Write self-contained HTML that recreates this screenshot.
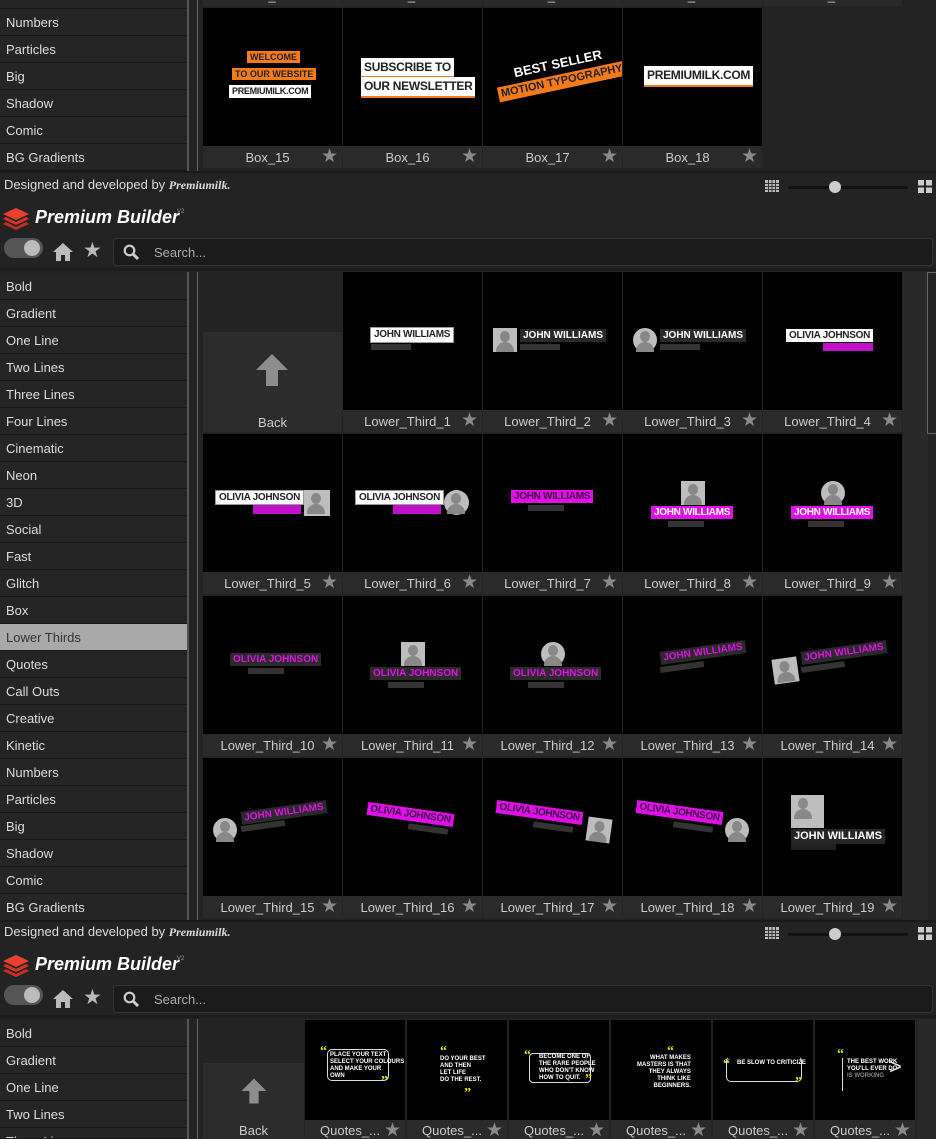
<!DOCTYPE html>
<html style="overflow:hidden;height:1139px"><head><meta charset="utf-8"><style>
*{box-sizing:border-box}
html,body{overflow:hidden}
body{margin:0;width:936px;height:1139px;overflow:hidden;background:#232323;position:relative;font-family:"Liberation Sans",sans-serif;color:#ddd}
.a{position:absolute}
.si{position:absolute;left:0;width:187px;height:27px;background:#252525;border-bottom:1px solid #191919;color:#ddd;font-size:13px;line-height:27px;padding-left:6px}
.sel{background:#a9a9a9;color:#333}
.c{position:absolute;width:139px}
.t{height:138px;background:#000;position:relative;overflow:hidden}
.l{height:22px;background:#2a2a2a;color:#ccc;text-align:center;line-height:24px;font-size:13px;position:relative;padding-right:14px;padding-left:4px;white-space:nowrap}
.l b{position:absolute;right:4px;top:0;color:#8a8a8a;font-weight:normal;font-size:19px;line-height:22px}
.qc{position:absolute;width:100px}
.qc .t{height:100px}
.qc .l{font-size:13px;height:20px;line-height:22px}
.wb{position:absolute;background:#fff;color:#222;font:bold 10px/13px "Liberation Sans",sans-serif;padding:0 3px;white-space:nowrap;letter-spacing:-.3px}
.mb{position:absolute;background:#e010e6;color:#fff;font:bold 10px/13px "Liberation Sans",sans-serif;padding:0 3px;white-space:nowrap;letter-spacing:-.3px}
.mb.p{color:#40004a}
.gb{position:absolute;background:#333;height:6px}
.pb{position:absolute;background:#c010c8;height:6px}
.av{position:absolute;background:#bdbdbd;width:24px;height:24px}
.av:after{content:"";position:absolute;left:7px;top:3px;width:10px;height:11px;border-radius:50%;background:#888}
.av:before{content:"";position:absolute;left:3px;top:14px;width:18px;height:10px;border-radius:9px 9px 0 0;background:#888}
.ci{border-radius:50%}
.ds{position:absolute;background:#2a2a2a;color:#fff;font:bold 10px/13px "Liberation Sans",sans-serif;padding:0 3px;white-space:nowrap}
.rot{transform:rotate(-8deg)}
.ob{position:absolute;background:#f47a1a;color:#222;font:bold 8px/11px "Liberation Sans",sans-serif;padding:0 3px;white-space:nowrap}
.hdr{position:absolute;left:0;width:936px}
.qt{position:absolute;color:#fff;font:bold 6px/7px "Liberation Sans",sans-serif;white-space:nowrap}
.qy{position:absolute;color:#e6e000;font:bold 14px/14px "Liberation Serif",serif}
</style></head><body>

<div class="si" style="top:-18px">Kinetic</div>
<div class="si" style="top:9px">Numbers</div>
<div class="si" style="top:36px">Particles</div>
<div class="si" style="top:63px">Big</div>
<div class="si" style="top:90px">Shadow</div>
<div class="si" style="top:117px">Comic</div>
<div class="si" style="top:144px">BG Gradients</div>
<div class="a" style="left:187px;top:0;width:2px;height:171px;background:#555"></div>
<div class="a" style="left:197px;top:0;width:1px;height:171px;background:#666"></div>

<div class="c" style="left:203px;top:-16px"><div class="l">Box_11<b>★</b></div></div>
<div class="c" style="left:343px;top:-16px"><div class="l">Box_12<b>★</b></div></div>
<div class="c" style="left:483px;top:-16px"><div class="l">Box_13<b>★</b></div></div>
<div class="c" style="left:623px;top:-16px"><div class="l">Box_14<b>★</b></div></div>
<div class="c" style="left:763px;top:-16px"><div class="l">Box_10<b>★</b></div></div>

<div class="c" style="left:203px;top:8px"><div class="t">
<div class="ob" style="left:44px;top:43px;font-size:9px;line-height:12px">WELCOME</div>
<div class="ob" style="left:29px;top:60px;font-size:9px;line-height:12px">TO OUR WEBSITE</div>
<div class="wb" style="left:26px;top:77px;font-size:9px;line-height:13px">PREMIUMILK.COM</div>
</div><div class="l">Box_15<b>★</b></div></div>
<div class="c" style="left:343px;top:8px"><div class="t">
<div class="wb" style="left:18px;top:50px;font-size:12px;line-height:18px;border-bottom:2px solid #f47a1a">SUBSCRIBE TO</div>
<div class="wb" style="left:18px;top:69px;font-size:12px;line-height:19px;border-bottom:2px solid #f47a1a">OUR NEWSLETTER</div>
</div><div class="l">Box_16<b>★</b></div></div>
<div class="c" style="left:483px;top:8px"><div class="t">
<div class="a" style="left:30px;top:48px;color:#fff;font:bold 13px 'Liberation Sans',sans-serif;transform:rotate(-12deg)">BEST SELLER</div>
<div class="ob" style="left:14px;top:66px;font-size:11px;line-height:15px;transform:rotate(-12deg)">MOTION TYPOGRAPHY</div>
</div><div class="l">Box_17<b>★</b></div></div>
<div class="c" style="left:623px;top:8px"><div class="t">
<div class="wb" style="left:21px;top:58px;font-size:12px;line-height:19px;border-bottom:2px solid #f47a1a">PREMIUMILK.COM</div>
</div><div class="l">Box_18<b>★</b></div></div>

<div class="hdr" style="top:171px;height:2px;background:#1a1a1a"></div>
<div class="a" style="left:4px;top:177px;font-size:13px;color:#ddd">Designed and developed by <i style="font-family:'Liberation Serif',serif;font-weight:bold;font-size:12px">Premiumilk.</i></div>
<svg class="a" style="left:765px;top:180px" width="14" height="12"><rect x="0" y="0" width="14" height="12" fill="#bbb"/><path d="M3.5 0V12M7 0V12M10.5 0V12M0 3.5H14M0 6.5H14M0 9.5H14" stroke="#333"/></svg>
<div class="a" style="left:788px;top:186px;width:120px;height:3px;background:#111;border-radius:2px"></div>
<div class="a" style="left:829px;top:181px;width:12px;height:12px;background:#ccc;border-radius:50%"></div>
<svg class="a" style="left:918px;top:180px" width="14" height="13"><g fill="#ccc"><rect x="0" y="0" width="6" height="5.5"/><rect x="8" y="0" width="6" height="5.5"/><rect x="0" y="7.5" width="6" height="5.5"/><rect x="8" y="7.5" width="6" height="5.5"/></g></svg>

<svg class="a" style="left:3px;top:208px" width="26" height="22" viewBox="0 0 26 22"><path d="M13 0L26 6L13 12L0 6Z" fill="#e8412c"/><path d="M3 9L13 14L23 9L26 11L13 17L0 11Z" fill="#d83524"/><path d="M3 14L13 19L23 14L26 16L13 22L0 16Z" fill="#c82e1e"/></svg>
<div class="a" style="left:35px;top:207px;color:#fff;font:italic bold 18px 'Liberation Sans',sans-serif">Premium Builder</div>
<div class="a" style="left:177px;top:209px;color:#999;font-size:6px">V2</div>
<div class="a" style="left:4px;top:238px;width:39px;height:20px;background:#555;border-radius:10px"></div>
<div class="a" style="left:24px;top:240px;width:16px;height:16px;background:#bbb;border-radius:50%"></div>
<svg class="a" style="left:53px;top:242px" width="20" height="19" viewBox="0 0 20 19"><path d="M10 1L0 10H3V19H8V13H12V19H17V10H20Z" fill="#bbb"/></svg>
<div class="a" style="left:83px;top:238px;color:#bbb;font-size:21px">★</div>
<div class="a" style="left:113px;top:238px;width:820px;height:28px;background:#1b1b1b;border:1px solid #333;border-radius:4px"></div>
<svg class="a" style="left:123px;top:244px" width="16" height="16" viewBox="0 0 16 16"><circle cx="6.5" cy="6.5" r="4.8" fill="none" stroke="#ccc" stroke-width="2.2"/><path d="M10 10L15 15" stroke="#ccc" stroke-width="3"/></svg>
<div class="a" style="left:154px;top:245px;color:#aaa;font-size:13px">Search...</div>
<div class="hdr" style="top:268px;height:3px;background:#1d1d1d"></div>

<div class="si" style="top:273px">Bold</div>
<div class="si" style="top:300px">Gradient</div>
<div class="si" style="top:327px">One Line</div>
<div class="si" style="top:354px">Two Lines</div>
<div class="si" style="top:381px">Three Lines</div>
<div class="si" style="top:408px">Four Lines</div>
<div class="si" style="top:435px">Cinematic</div>
<div class="si" style="top:462px">Neon</div>
<div class="si" style="top:489px">3D</div>
<div class="si" style="top:516px">Social</div>
<div class="si" style="top:543px">Fast</div>
<div class="si" style="top:570px">Glitch</div>
<div class="si" style="top:597px">Box</div>
<div class="si sel" style="top:624px">Lower Thirds</div>
<div class="si" style="top:651px">Quotes</div>
<div class="si" style="top:678px">Call Outs</div>
<div class="si" style="top:705px">Creative</div>
<div class="si" style="top:732px">Kinetic</div>
<div class="si" style="top:759px">Numbers</div>
<div class="si" style="top:786px">Particles</div>
<div class="si" style="top:813px">Big</div>
<div class="si" style="top:840px">Shadow</div>
<div class="si" style="top:867px">Comic</div>
<div class="si" style="top:894px">BG Gradients</div>
<div class="a" style="left:187px;top:272px;width:2px;height:648px;background:#555"></div>
<div class="a" style="left:197px;top:272px;width:1px;height:648px;background:#666"></div>
<div class="a" style="left:903px;top:272px;width:25px;height:648px;background:#292929"></div>
<div class="a" style="left:927px;top:272px;width:9px;height:162px;border:1px solid #666;border-right:none"></div>

<div class="a" style="left:203px;top:332px;width:139px;height:100px;background:#2c2c2c"></div>
<svg class="a" style="left:254px;top:352px" width="36" height="36" viewBox="0 0 36 36"><path d="M18 2L34 18H24V34H12V18H2Z" fill="#8d8d8d"/></svg>
<div class="a" style="left:203px;top:411px;width:139px;text-align:center;font-size:13px;line-height:24px;color:#ccc">Back</div>

<div class="c" style="left:343px;top:272px"><div class="t">
<div class="wb" style="left:28px;top:56px;font-size:10px;line-height:14px;outline:1px solid #999">JOHN WILLIAMS</div>
<div class="gb" style="left:28px;top:72px;width:40px"></div>
</div><div class="l">Lower_Third_1<b>★</b></div></div>
<div class="c" style="left:483px;top:272px"><div class="t">
<div class="av" style="left:10px;top:56px"></div>
<div class="ds" style="left:37px;top:57px">JOHN WILLIAMS</div>
<div class="gb" style="left:37px;top:72px;width:40px"></div>
</div><div class="l">Lower_Third_2<b>★</b></div></div>
<div class="c" style="left:623px;top:272px"><div class="t">
<div class="av ci" style="left:10px;top:56px"></div>
<div class="ds" style="left:37px;top:57px">JOHN WILLIAMS</div>
<div class="gb" style="left:37px;top:72px;width:40px"></div>
</div><div class="l">Lower_Third_3<b>★</b></div></div>
<div class="c" style="left:763px;top:272px"><div class="t">
<div class="wb" style="left:23px;top:57px">OLIVIA JOHNSON</div>
<div class="pb" style="left:60px;top:71px;width:50px;height:8px"></div>
</div><div class="l">Lower_Third_4<b>★</b></div></div>

<div class="c" style="left:203px;top:434px"><div class="t">
<div class="wb" style="left:13px;top:57px;outline:1px solid #999">OLIVIA JOHNSON</div>
<div class="pb" style="left:50px;top:71px;width:48px;height:9px"></div>
<div class="av" style="left:101px;top:56px;width:26px;height:26px"></div>
</div><div class="l">Lower_Third_5<b>★</b></div></div>
<div class="c" style="left:343px;top:434px"><div class="t">
<div class="wb" style="left:13px;top:57px;outline:1px solid #999">OLIVIA JOHNSON</div>
<div class="pb" style="left:50px;top:71px;width:48px;height:9px"></div>
<div class="av ci" style="left:101px;top:56px;width:25px;height:25px"></div>
</div><div class="l">Lower_Third_6<b>★</b></div></div>
<div class="c" style="left:483px;top:434px"><div class="t">
<div class="mb p" style="left:28px;top:56px">JOHN WILLIAMS</div>
<div class="gb" style="left:45px;top:71px;width:36px"></div>
</div><div class="l">Lower_Third_7<b>★</b></div></div>
<div class="c" style="left:623px;top:434px"><div class="t">
<div class="av" style="left:58px;top:47px"></div>
<div class="mb" style="left:28px;top:72px">JOHN WILLIAMS</div>
<div class="gb" style="left:45px;top:87px;width:36px"></div>
</div><div class="l">Lower_Third_8<b>★</b></div></div>
<div class="c" style="left:763px;top:434px"><div class="t">
<div class="av ci" style="left:58px;top:47px"></div>
<div class="mb" style="left:28px;top:72px">JOHN WILLIAMS</div>
<div class="gb" style="left:45px;top:87px;width:36px"></div>
</div><div class="l">Lower_Third_9<b>★</b></div></div>

<div class="c" style="left:203px;top:596px"><div class="t">
<div class="ds" style="left:27px;top:57px;color:#e010e6">OLIVIA JOHNSON</div>
<div class="gb" style="left:45px;top:72px;width:36px"></div>
</div><div class="l">Lower_Third_10<b>★</b></div></div>
<div class="c" style="left:343px;top:596px"><div class="t">
<div class="av" style="left:58px;top:46px"></div>
<div class="ds" style="left:27px;top:71px;color:#e010e6">OLIVIA JOHNSON</div>
<div class="gb" style="left:45px;top:86px;width:36px"></div>
</div><div class="l">Lower_Third_11<b>★</b></div></div>
<div class="c" style="left:483px;top:596px"><div class="t">
<div class="av ci" style="left:58px;top:46px"></div>
<div class="ds" style="left:27px;top:71px;color:#e010e6">OLIVIA JOHNSON</div>
<div class="gb" style="left:45px;top:86px;width:36px"></div>
</div><div class="l">Lower_Third_12<b>★</b></div></div>
<div class="c" style="left:623px;top:596px"><div class="t">
<div class="ds rot" style="left:37px;top:50px;color:#e010e6">JOHN WILLIAMS</div>
<div class="gb rot" style="left:37px;top:68px;width:44px"></div>
</div><div class="l">Lower_Third_13<b>★</b></div></div>
<div class="c" style="left:763px;top:596px"><div class="t">
<div class="av rot" style="left:10px;top:62px;width:25px;height:25px"></div>
<div class="ds rot" style="left:38px;top:50px;color:#e010e6">JOHN WILLIAMS</div>
<div class="gb rot" style="left:38px;top:68px;width:44px"></div>
</div><div class="l">Lower_Third_14<b>★</b></div></div>

<div class="c" style="left:203px;top:758px"><div class="t">
<div class="av ci" style="left:10px;top:60px"></div>
<div class="ds rot" style="left:38px;top:48px;color:#e010e6">JOHN WILLIAMS</div>
<div class="gb rot" style="left:38px;top:65px;width:44px"></div>
</div><div class="l">Lower_Third_15<b>★</b></div></div>
<div class="c" style="left:343px;top:758px"><div class="t">
<div class="mb p" style="left:24px;top:50px;transform:rotate(8deg)">OLIVIA JOHNSON</div>
<div class="gb" style="left:65px;top:68px;width:40px;transform:rotate(8deg)"></div>
</div><div class="l">Lower_Third_16<b>★</b></div></div>
<div class="c" style="left:483px;top:758px"><div class="t">
<div class="mb p" style="left:13px;top:48px;transform:rotate(8deg)">OLIVIA JOHNSON</div>
<div class="gb" style="left:50px;top:66px;width:40px;transform:rotate(8deg)"></div>
<div class="av" style="left:104px;top:60px;transform:rotate(8deg)"></div>
</div><div class="l">Lower_Third_17<b>★</b></div></div>
<div class="c" style="left:623px;top:758px"><div class="t">
<div class="mb p" style="left:13px;top:48px;transform:rotate(8deg)">OLIVIA JOHNSON</div>
<div class="gb" style="left:50px;top:66px;width:40px;transform:rotate(8deg)"></div>
<div class="av ci" style="left:102px;top:60px"></div>
</div><div class="l">Lower_Third_18<b>★</b></div></div>
<div class="c" style="left:763px;top:758px"><div class="t">
<div class="av" style="left:28px;top:37px;width:33px;height:33px"></div>
<div class="ds" style="left:28px;top:71px;font-size:11px;line-height:15px;background:#262626">JOHN WILLIAMS</div>
<div class="gb" style="left:28px;top:86px;width:45px;background:#222"></div>
</div><div class="l">Lower_Third_19<b>★</b></div></div>

<div class="hdr" style="top:920px;height:2px;background:#1a1a1a"></div>
<div class="a" style="left:4px;top:924px;font-size:13px;color:#ddd">Designed and developed by <i style="font-family:'Liberation Serif',serif;font-weight:bold;font-size:12px">Premiumilk.</i></div>
<svg class="a" style="left:765px;top:927px" width="14" height="12"><rect x="0" y="0" width="14" height="12" fill="#bbb"/><path d="M3.5 0V12M7 0V12M10.5 0V12M0 3.5H14M0 6.5H14M0 9.5H14" stroke="#333"/></svg>
<div class="a" style="left:788px;top:933px;width:120px;height:3px;background:#111;border-radius:2px"></div>
<div class="a" style="left:829px;top:928px;width:12px;height:12px;background:#ccc;border-radius:50%"></div>
<svg class="a" style="left:918px;top:927px" width="14" height="13"><g fill="#ccc"><rect x="0" y="0" width="6" height="5.5"/><rect x="8" y="0" width="6" height="5.5"/><rect x="0" y="7.5" width="6" height="5.5"/><rect x="8" y="7.5" width="6" height="5.5"/></g></svg>

<svg class="a" style="left:3px;top:955px" width="26" height="22" viewBox="0 0 26 22"><path d="M13 0L26 6L13 12L0 6Z" fill="#e8412c"/><path d="M3 9L13 14L23 9L26 11L13 17L0 11Z" fill="#d83524"/><path d="M3 14L13 19L23 14L26 16L13 22L0 16Z" fill="#c82e1e"/></svg>
<div class="a" style="left:35px;top:954px;color:#fff;font:italic bold 18px 'Liberation Sans',sans-serif">Premium Builder</div>
<div class="a" style="left:177px;top:956px;color:#999;font-size:6px">V2</div>
<div class="a" style="left:4px;top:985px;width:39px;height:20px;background:#555;border-radius:10px"></div>
<div class="a" style="left:24px;top:987px;width:16px;height:16px;background:#bbb;border-radius:50%"></div>
<svg class="a" style="left:53px;top:989px" width="20" height="19" viewBox="0 0 20 19"><path d="M10 1L0 10H3V19H8V13H12V19H17V10H20Z" fill="#bbb"/></svg>
<div class="a" style="left:83px;top:985px;color:#bbb;font-size:21px">★</div>
<div class="a" style="left:113px;top:985px;width:820px;height:28px;background:#1b1b1b;border:1px solid #333;border-radius:4px"></div>
<svg class="a" style="left:123px;top:991px" width="16" height="16" viewBox="0 0 16 16"><circle cx="6.5" cy="6.5" r="4.8" fill="none" stroke="#ccc" stroke-width="2.2"/><path d="M10 10L15 15" stroke="#ccc" stroke-width="3"/></svg>
<div class="a" style="left:154px;top:992px;color:#aaa;font-size:13px">Search...</div>
<div class="hdr" style="top:1015px;height:3px;background:#1d1d1d"></div>

<div class="si" style="top:1020px">Bold</div>
<div class="si" style="top:1047px">Gradient</div>
<div class="si" style="top:1074px">One Line</div>
<div class="si" style="top:1101px">Two Lines</div>
<div class="si" style="top:1128px;height:11px;line-height:27px;overflow:hidden">Three Lines</div>
<div class="a" style="left:187px;top:1019px;width:2px;height:120px;background:#555"></div>
<div class="a" style="left:197px;top:1019px;width:1px;height:120px;background:#666"></div>

<div class="a" style="left:203px;top:1063px;width:101px;height:76px;background:#2c2c2c"></div>
<svg class="a" style="left:240px;top:1077px" width="28" height="28" viewBox="0 0 36 36"><path d="M18 2L34 18H24V34H12V18H2Z" fill="#8d8d8d"/></svg>
<div class="a" style="left:203px;top:1123px;width:101px;text-align:center;font-size:13px;color:#ccc">Back</div>

<div class="qc" style="left:305px;top:1020px"><div class="t">
<div class="qy" style="left:15px;top:25px">“</div>
<div class="a" style="left:22px;top:29px;width:62px;height:32px;border:1px solid #ddd;border-radius:5px"></div>
<div class="qt" style="left:25px;top:32px">PLACE YOUR TEXT<br>SELECT YOUR COLOURS<br>AND MAKE YOUR<br>OWN</div>
<div class="qy" style="left:76px;top:55px">”</div>
</div><div class="l">Quotes_...<b>★</b></div></div>
<div class="qc" style="left:407px;top:1020px"><div class="t">
<div class="qy" style="left:33px;top:25px">“</div>
<div class="qt" style="left:33px;top:36px">DO YOUR BEST<br>AND THEN<br>LET LIFE<br>DO THE REST.</div>
<div class="qy" style="left:57px;top:67px">”</div>
</div><div class="l">Quotes_...<b>★</b></div></div>
<div class="qc" style="left:509px;top:1020px"><div class="t">
<div class="qy" style="left:15px;top:29px">“</div>
<div class="a" style="left:20px;top:33px;width:62px;height:30px;border:1px solid #ddd;border-radius:4px"></div>
<div class="qt" style="left:30px;top:34px">BECOME ONE OF<br>THE RARE PEOPLE<br>WHO DON'T KNOW<br>HOW TO QUIT.</div>
<div class="qy" style="left:76px;top:53px">”</div>
</div><div class="l">Quotes_...<b>★</b></div></div>
<div class="qc" style="left:611px;top:1020px"><div class="t">
<div class="qy" style="left:56px;top:25px">“</div>
<div class="qt" style="left:26px;top:35px;text-align:right">WHAT MAKES<br>MASTERS IS THAT<br>THEY ALWAYS<br>THINK LIKE<br>BEGINNERS.</div>
</div><div class="l">Quotes_...<b>★</b></div></div>
<div class="qc" style="left:713px;top:1020px"><div class="t">
<div class="qy" style="left:10px;top:38px">“</div>
<div class="a" style="left:13px;top:36px;width:76px;height:26px;border:1px solid #ddd;border-radius:5px;border-top-color:transparent"></div>
<div class="qt" style="left:24px;top:40px">BE SLOW TO CRITICIZE</div>
<div class="qy" style="left:82px;top:56px">”</div>
</div><div class="l">Quotes_...<b>★</b></div></div>
<div class="qc" style="left:815px;top:1020px"><div class="t">
<div class="qy" style="left:22px;top:28px">“</div>
<div class="a" style="left:27px;top:38px;width:1px;height:33px;background:#ddd"></div>
<div class="qt" style="left:32px;top:39px">THE BEST WORK<br>YOU'LL EVER DO<br><span style="color:#888">IS WORKING</span></div>
<div class="a" style="left:74px;top:35px;color:#ddd;font-size:22px;line-height:24px">&gt;</div>
</div><div class="l">Quotes_...<b>★</b></div></div>
<div class="a" style="left:917px;top:1019px;width:19px;height:120px;background:#292929"></div>
</body></html>
